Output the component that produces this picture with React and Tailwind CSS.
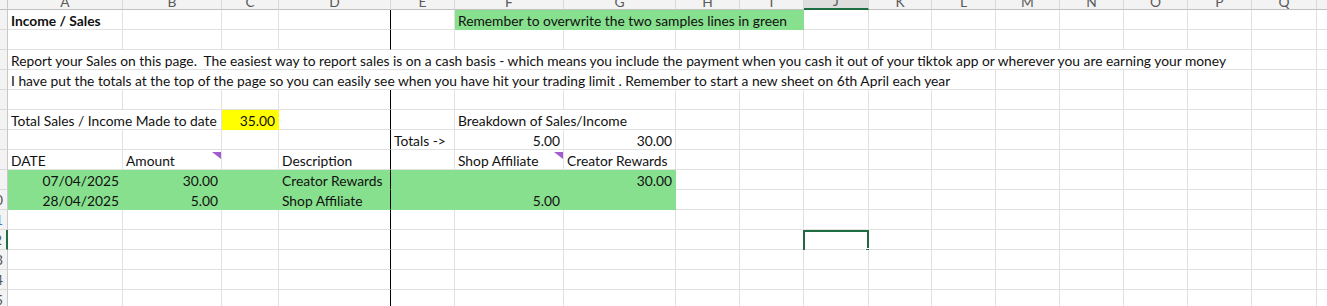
const LETTERS = ["A", "B", "C", "D", "E", "F", "G", "H", "I", "J", "K", "L", "M", "N", "O", "P", "Q", "R"];

const SPAN = { 1: "", 2: "col-span-2", 4: "col-span-4", 12: "col-span-12", 16: "col-span-16" };

const FILL = {
  none: "bg-white",
  green: "bg-[#87e08d]",
  yellow: "bg-[#ffff00]",
};

const GRID = {
  none: "border-r-[#e1e1e1] border-b-[#e1e1e1]",
  green: "border-r-[#87e08d] border-b-[#87e08d]",
  yellow: "border-r-[#ffff00] border-b-[#ffff00]",
};

const greenRow = (cells) => {
  const out = {};
  for (let c = 0; c < 7; c++) out[c] = { fill: "green", ...(cells[c] || {}) };
  return out;
};

const ROWS = [
  {
    n: 1,
    cells: {
      0: { text: "Income / Sales", bold: true },
      5: { span: 4, text: "Remember to overwrite the two samples lines in green", fill: "green" },
    },
  },
  { n: 2, cells: {} },
  {
    n: 3,
    cells: {
      0: {
        span: 16,
        text: "Report your Sales on this page.  The easiest way to report sales is on a cash basis - which means you include the payment when you cash it out of your tiktok app or wherever you are earning your money",
      },
    },
  },
  {
    n: 4,
    cells: {
      0: {
        span: 12,
        text: "I have put the totals at the top of the page so you can easily see when you have hit your trading limit . Remember to start a new sheet on 6th April each year",
      },
    },
  },
  { n: 5, cells: {} },
  {
    n: 6,
    cells: {
      0: { span: 2, text: "Total Sales / Income Made to date" },
      2: { text: "35.00", right: true, fill: "yellow" },
      5: { span: 2, text: "Breakdown of Sales/Income" },
    },
  },
  {
    n: 7,
    cells: {
      4: { text: "Totals ->" },
      5: { text: "5.00", right: true },
      6: { text: "30.00", right: true },
    },
  },
  {
    n: 8,
    cells: {
      0: { text: "DATE" },
      1: { text: "Amount", note: true },
      3: { text: "Description" },
      5: { text: "Shop Affiliate", note: true },
      6: { text: "Creator Rewards" },
    },
  },
  {
    n: 9,
    cells: greenRow({
      0: { text: "07/04/2025", right: true },
      1: { text: "30.00", right: true },
      3: { text: "Creator Rewards" },
      6: { text: "30.00", right: true },
    }),
  },
  {
    n: 10,
    cells: greenRow({
      0: { text: "28/04/2025", right: true },
      1: { text: "5.00", right: true },
      3: { text: "Shop Affiliate" },
      5: { text: "5.00", right: true },
    }),
  },
  { n: 11, cells: {} },
  { n: 12, cells: {}, selected: true },
  { n: 13, cells: {} },
  { n: 14, cells: {} },
  { n: 15, cells: {} },
];

function NoteMark() {
  return (
    <svg className="absolute right-0 top-[2px]" width="9" height="7" viewBox="0 0 9 7">
      <polygon points="0,0 9,0 9,7" fill="#a35bd2" />
    </svg>
  );
}

function Cell({ def, col, selected }) {
  const span = def.span || 1;
  const last = col + span - 1;
  const fill = def.fill || "none";
  const rightEdge = last === 3 ? "border-r-black" : "";
  return (
    <div
      className={[
        "relative flex items-end whitespace-pre border-b border-r px-[3px] leading-[16px]",
        SPAN[span],
        FILL[fill],
        GRID[fill],
        rightEdge,
        def.right ? "justify-end" : "justify-start",
        def.bold ? "font-bold" : "",
      ].join(" ")}
    >
      {def.text}
      {def.note && <NoteMark />}
      {selected && (
        <div className="absolute -left-px top-0 h-[22px] w-[66px] border-2 border-[#1f6e43]">
          <div className="absolute -bottom-[4px] -right-[4px] h-[6px] w-[6px] border border-white bg-[#1f6e43]" />
        </div>
      )}
    </div>
  );
}

function SheetRow({ row }) {
  const out = [];
  let col = 0;
  while (col < LETTERS.length) {
    const def = row.cells[col] || {};
    out.push(<Cell key={col} def={def} col={col} selected={row.selected && col === 9} />);
    col += def.span || 1;
  }
  return (
    <>
      <div
        className={[
          "flex justify-end overflow-hidden border-b border-b-[#dadada] bg-[#f3f3f3] text-[#555]",
          row.selected ? "border-r-2 border-r-[#1f6e43]" : "border-r border-r-[#c8c8c8]",
        ].join(" ")}
      >
        <span
          className={[
            "w-[24px] shrink-0 text-center leading-[20px]",
            row.n === 11 ? "text-[#3a78c2]" : "",
          ].join(" ")}
        >
          {row.n}
        </span>
      </div>
      {out}
    </>
  );
}

export default function App() {
  return (
    <div className="h-[306px] w-[1327px] overflow-hidden bg-white font-['Lato',sans-serif] text-[13.8px] text-[#111]">
      <div className="grid grid-cols-[8px_115px_99px_57px_112px_64px_109px_112px_64px_64px_65px_63px_64px_64px_64px_64px_64px_65px_64px] grid-rows-[10px_repeat(15,20px)]">
        <div className="border-b border-r border-b-[#c0c0c0] border-r-[#c8c8c8] bg-[#f3f3f3]" />
        {LETTERS.map((l) => (
          <div
            key={l}
            className={[
              "flex items-end justify-center overflow-hidden border-r border-r-[#d8d8d8] leading-[14px] text-[#5a5a5a]",
              l === "J" ? "border-b-2 border-b-[#1f6e43] bg-[#dedede]" : "border-b border-b-[#c0c0c0] bg-[#f3f3f3]",
            ].join(" ")}
          >
            {l}
          </div>
        ))}
        {ROWS.map((row) => (
          <SheetRow key={row.n} row={row} />
        ))}
      </div>
    </div>
  );
}
